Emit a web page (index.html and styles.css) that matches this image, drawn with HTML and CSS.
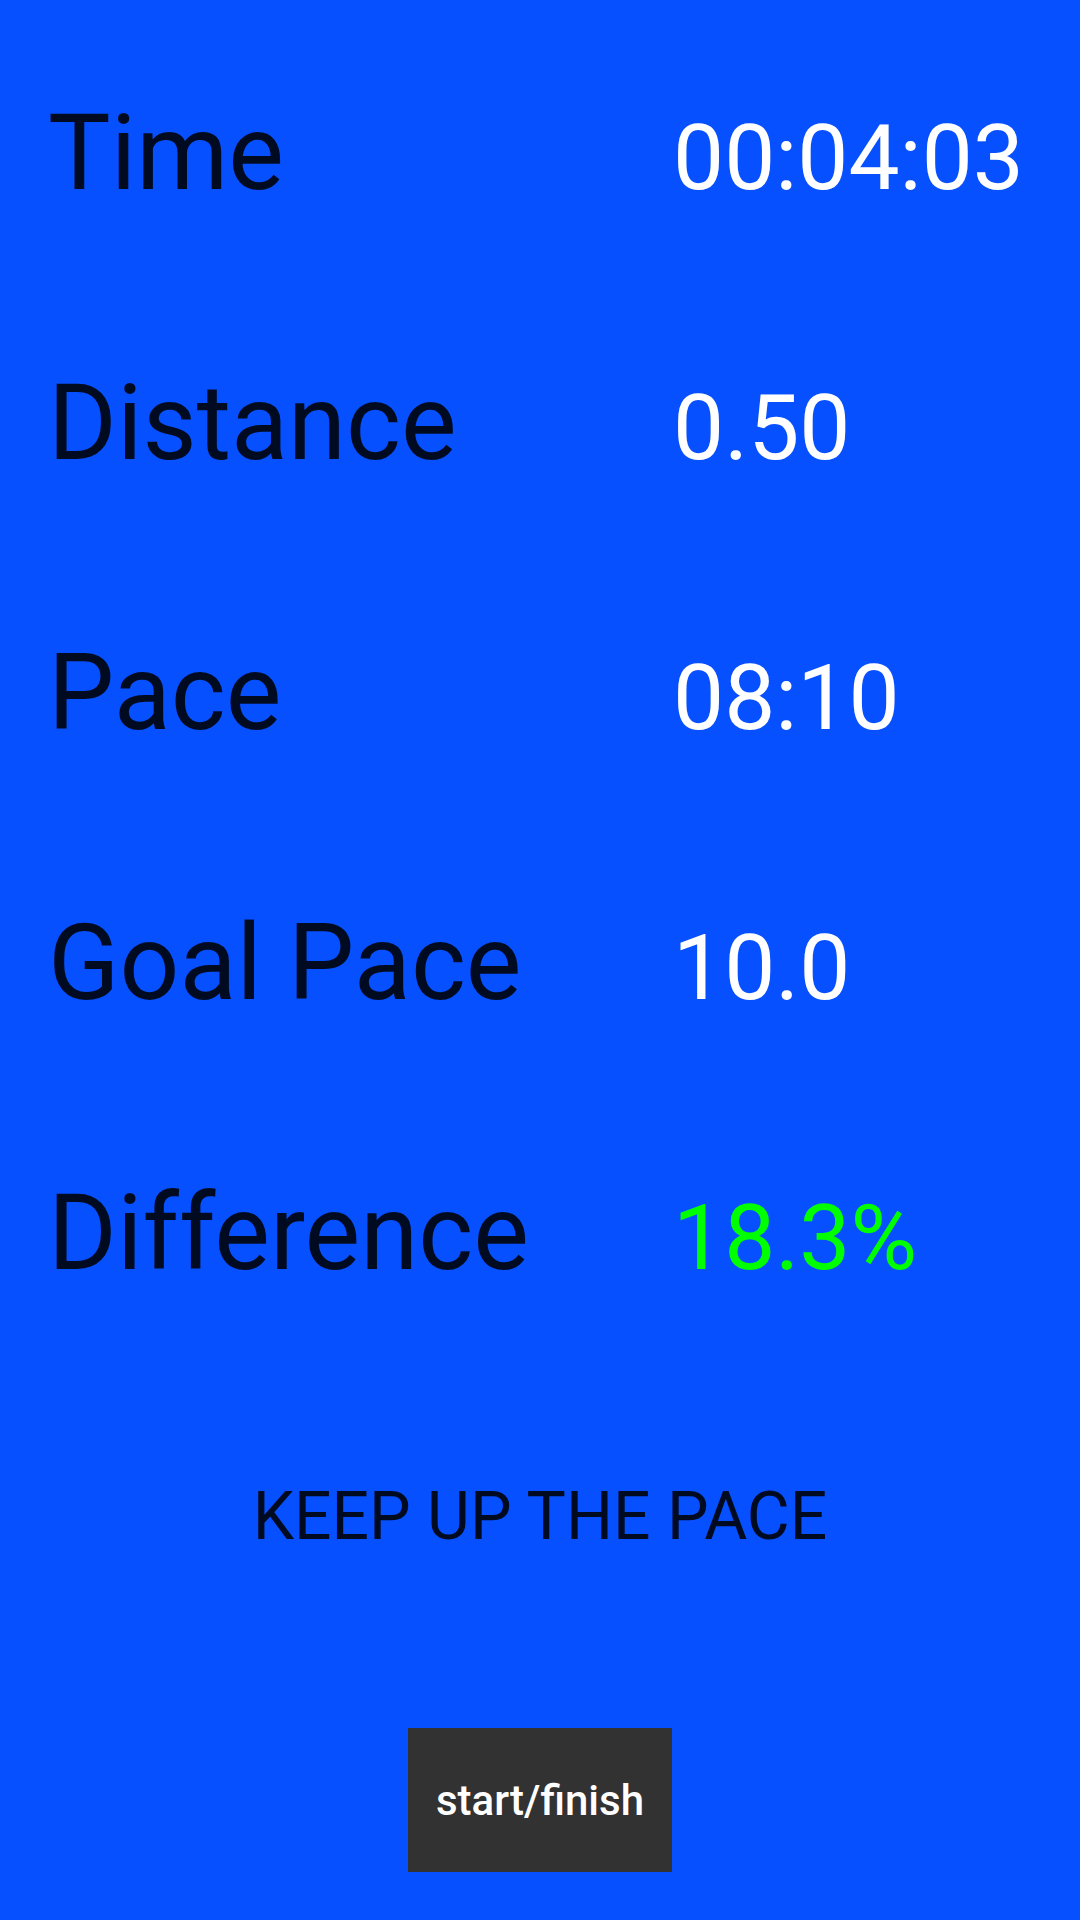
FILE: index.html
```html
<!DOCTYPE html>
<html>
<head>
<meta charset="utf-8">
<link rel="stylesheet" href="styles.css">
</head>
<body>
<main class="screen">
  <section class="stats">
    <div class="row"><span class="label">Time</span><span class="value">00:04:03</span></div>
    <div class="row"><span class="label">Distance</span><span class="value">0.50</span></div>
    <div class="row"><span class="label">Pace</span><span class="value">08:10</span></div>
    <div class="row"><span class="label">Goal Pace</span><span class="value">10.0</span></div>
    <div class="row"><span class="label">Difference</span><span class="value value-good">18.3%</span></div>
  </section>
  <p class="message">KEEP UP THE PACE</p>
  <div class="actions">
    <button class="btn">start/finish</button>
  </div>
</main>
</body>
</html>
```

FILE: styles.css
```css
html, body {
  margin: 0;
  padding: 0;
}
body {
  width: 1080px;
  height: 1920px;
  background: #0750ff;
  font-family: Roboto, "Noto Sans", sans-serif;
  overflow: hidden;
}
.screen {
  display: flex;
  flex-direction: column;
  padding-top: 92px;
}
.stats {
  display: flex;
  flex-direction: column;
}
.row {
  height: 270px;
  display: flex;
  align-items: baseline;
}
.label {
  width: 625px;
  padding-left: 48px;
  font-size: 105px;
  line-height: normal;
  color: rgba(0, 0, 0, 0.87);
}
.value {
  font-size: 91px;
  line-height: normal;
  color: #ffffff;
}
.value-good {
  color: #00ff00;
}
.message {
  margin: 36px 0 0 0;
  text-align: center;
  font-size: 66px;
  line-height: normal;
  color: rgba(0, 0, 0, 0.87);
}
.actions {
  display: flex;
  justify-content: center;
  margin-top: 173px;
}
.btn {
  width: 264px;
  height: 144px;
  border: none;
  border-radius: 0;
  background: #323232;
  color: #ffffff;
  font-family: Roboto, "Noto Sans", sans-serif;
  font-weight: 500;
  font-size: 42px;
  padding: 0;
}
```
